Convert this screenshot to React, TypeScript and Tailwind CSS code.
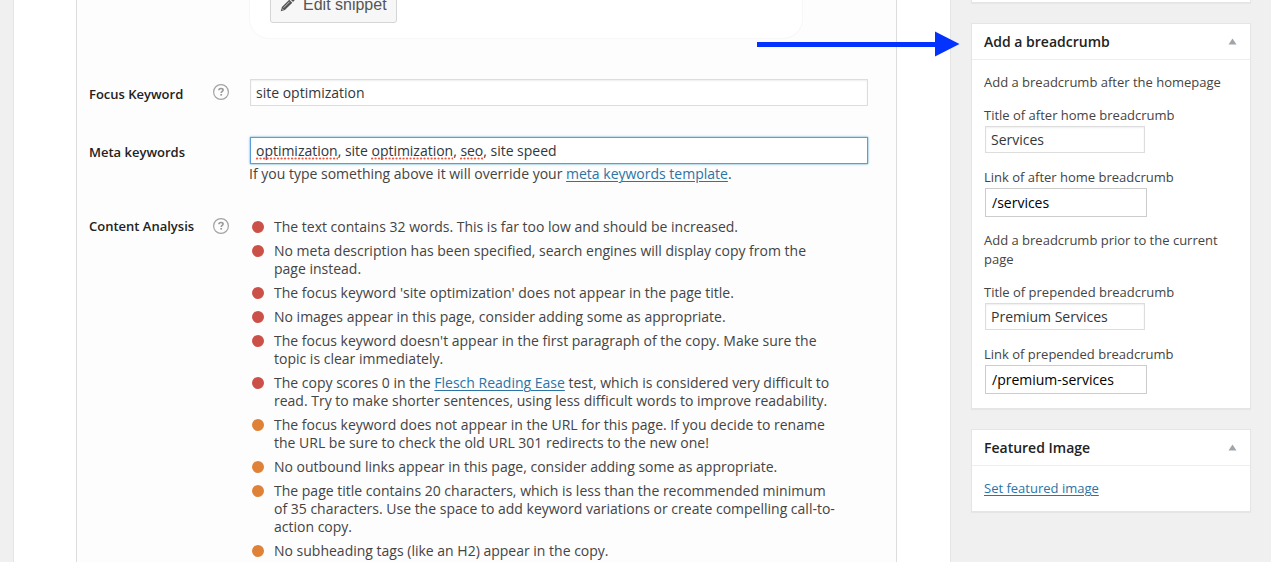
import React from 'react';

type Level = 'bad' | 'ok';
interface Finding {
  level: Level;
  lines: React.ReactNode[];
}

const findings: Finding[] = [
  { level: 'bad', lines: ['The text contains 32 words. This is far too low and should be increased.'] },
  { level: 'bad', lines: ['No meta description has been specified, search engines will display copy from the', 'page instead.'] },
  { level: 'bad', lines: ["The focus keyword 'site optimization' does not appear in the page title."] },
  { level: 'bad', lines: ['No images appear in this page, consider adding some as appropriate.'] },
  { level: 'bad', lines: ["The focus keyword doesn't appear in the first paragraph of the copy. Make sure the", 'topic is clear immediately.'] },
  {
    level: 'bad',
    lines: [
      <>The copy scores 0 in the <Link>Flesch Reading Ease</Link> test, which is considered very difficult to</>,
      'read. Try to make shorter sentences, using less difficult words to improve readability.',
    ],
  },
  { level: 'ok', lines: ['The focus keyword does not appear in the URL for this page. If you decide to rename', 'the URL be sure to check the old URL 301 redirects to the new one!'] },
  { level: 'ok', lines: ['No outbound links appear in this page, consider adding some as appropriate.'] },
  { level: 'ok', lines: ['The page title contains 20 characters, which is less than the recommended minimum', 'of 35 characters. Use the space to add keyword variations or create compelling call-to-', 'action copy.'] },
  { level: 'ok', lines: ['No subheading tags (like an H2) appear in the copy.'] },
];

function Link({ children }: { children: React.ReactNode }) {
  return <a className="text-[#2a74a6] underline decoration-1 underline-offset-2">{children}</a>;
}

function HelpIcon() {
  return (
    <svg width="16" height="16" viewBox="0 0 16 16" fill="none">
      <circle cx="8" cy="8" r="7.4" stroke="#a3a3a3" strokeWidth="1.2" />
      <path d="M5.9 6.2C5.9 4.9 6.8 4.5 8 4.5s2.1.6 2.1 1.6c0 1.3-1.9 1.3-1.9 2.8" stroke="#999" strokeWidth="1.6" />
      <rect x="7.3" y="10" width="1.8" height="1.6" fill="#999" />
    </svg>
  );
}

function RowLabel({ text, help, raised }: { text: string; help?: boolean; raised?: boolean }) {
  return (
    <div className="flex w-[161px] shrink-0 items-start">
      <div className={`w-[124px] text-[13px] font-semibold leading-[18px] text-[#222] ${raised ? 'pt-[4px]' : 'pt-[6px]'}`}>{text}</div>
      {help && <div className="pt-[5px]"><HelpIcon /></div>}
    </div>
  );
}

function Misspelled({ children }: { children: React.ReactNode }) {
  return (
    <span className="relative">
      {children}
      <svg className="absolute left-0 top-[16px] h-[3px] w-full">
        <line x1="1" y1="1.5" x2="100%" y2="1.5" stroke="#ee5a43" strokeWidth="2.2" strokeLinecap="round" strokeDasharray="0.1 3.4" />
      </svg>
    </span>
  );
}

function Card({ title, className, children }: { title: string; className: string; children: React.ReactNode }) {
  return (
    <section className={`border border-[#e5e5e5] bg-white shadow-[0_1px_1px_rgba(0,0,0,0.04)] ${className}`}>
      <header className="flex h-[36px] items-center justify-between border-b border-[#eee] pl-3 pr-[13px]">
        <h2 className="text-[14px] font-semibold leading-5 text-[#222]">{title}</h2>
        <svg width="9" height="7" viewBox="0 0 9 7"><path d="M4.5 .5 8.5 6.5H.5Z" fill="#a0a5aa" /></svg>
      </header>
      {children}
    </section>
  );
}

function TitleField({ label, value }: { label: string; value: string }) {
  return (
    <div>
      <div className="h-[20px] leading-[19px]">{label}</div>
      <div className="ml-px h-[27px] w-[160px] border border-[#ddd] bg-white pl-[5px] text-[14px] leading-[25px] text-[#32373c] shadow-[inset_0_1px_2px_rgba(0,0,0,0.07)]">{value}</div>
    </div>
  );
}

function LinkField({ label, value }: { label: string; value: string }) {
  return (
    <div>
      <div className="h-[20px] leading-[19px]">{label}</div>
      <div className="ml-px h-[29px] w-[162px] border border-[#ccc] bg-white pl-[6px] text-[14px] leading-[27px] text-black">{value}</div>
    </div>
  );
}

export default function App() {
  return (
    <div className="relative flex h-[562px] w-[1271px] overflow-hidden bg-[#f0f0f0] pl-[13px] font-['Open_Sans','Noto_Sans',sans-serif] text-[13px] text-[#444]">
      <main className="h-full w-[938px] shrink-0 border-x border-[#e5e5e5] bg-white pl-[62px]">
        <div className="h-full w-[821px] border-x border-[#ddd] bg-[#fdfdfd] pl-[12px]">
          <div className="ml-[160px] flex h-[39px] w-[554px] items-start rounded-b-[20px] border border-t-0 border-[#f7f7f7] bg-white pl-[20px]">
            <button className="-mt-[14px] flex h-[37px] w-[127px] items-center rounded-[3px] border border-[#d5d5d5] bg-[#f7f7f7] pl-[9px] font-['Liberation_Sans',sans-serif] text-[16px] leading-[18px] text-[#555]">
              <svg width="15" height="15" viewBox="0 0 15 15" className="mr-[8px]">
                <path d="M10 2 11.2.8Q12 0 12.8.8L14.2 2.2Q15 3 14.2 3.8L13 5ZM9.3 2.7 12.3 5.7 4.9 13.1.7 14.3 1.9 10.1Z" fill="#555" />
                <path d="M3.6 10.7 9.6 4.7M2 11.6 3.4 13" stroke="#f7f7f7" strokeWidth=".7" />
              </svg>
              Edit snippet
            </button>
          </div>
          <div className="mt-[40px] flex">
            <RowLabel text="Focus Keyword" help />
            <div className="h-[27px] w-[618px] border border-[#ddd] bg-white pl-[5px] text-[14px] leading-[25px] text-[#32373c] shadow-[inset_0_1px_2px_rgba(0,0,0,0.07)]">site optimization</div>
          </div>
          <div className="mt-[31px] flex">
            <RowLabel text="Meta keywords" />
            <div>
              <div className="h-[27px] w-[618px] whitespace-nowrap border border-[#5b9dd9] bg-white pl-[5px] text-[14px] leading-[25px] tracking-[-0.02px] text-[#32373c] shadow-[0_0_2px_rgba(30,140,190,0.8)]">
                <Misspelled>optimization</Misspelled>, site <Misspelled>optimization</Misspelled>, <Misspelled>seo</Misspelled>, site speed
              </div>
              <p className="-ml-px text-[14px] leading-[20px]">
                If you type something above it will override your <Link>meta keywords template</Link>.
              </p>
            </div>
          </div>
          <div className="mt-[29px] flex">
            <RowLabel text="Content Analysis" help raised />
            <ul className="flex flex-col gap-[6px] pl-[2px] pt-[5px] text-[14px] leading-[18px]">
              {findings.map((f, i) => (
                <li key={i} className="flex gap-[10px]">
                  <span className={`mt-[3px] size-3 shrink-0 rounded-full ${f.level === 'bad' ? 'bg-[#cb5047]' : 'bg-[#df8238]'}`} />
                  <div>
                    {f.lines.map((line, j) => (
                      <div key={j} className="whitespace-nowrap">{line}</div>
                    ))}
                  </div>
                </li>
              ))}
            </ul>
          </div>
        </div>
      </main>

      <aside className="ml-[20px] w-[280px] shrink-0">
        <div className="h-[3px] border border-t-0 border-[#e5e5e5] bg-white shadow-[0_1px_1px_rgba(0,0,0,0.04)]" />
        <Card title="Add a breadcrumb" className="mt-[20px] h-[386px]">
          <div className="px-3 pt-[13px]">
            <p className="leading-[19px]">Add a breadcrumb after the homepage</p>
            <div className="mt-[14px] flex flex-col gap-[15px]">
              <TitleField label="Title of after home breadcrumb" value="Services" />
              <LinkField label="Link of after home breadcrumb" value="/services" />
            </div>
            <p className="mt-[14px] leading-[19px]">Add a breadcrumb prior to the current<br />page</p>
            <div className="mt-[14px] flex flex-col gap-[15px]">
              <TitleField label="Title of prepended breadcrumb" value="Premium Services" />
              <LinkField label="Link of prepended breadcrumb" value="/premium-services" />
            </div>
          </div>
        </Card>
        <Card title="Featured Image" className="mt-[20px] h-[83px]">
          <div className="px-3 pt-[13px] leading-[19px]"><Link>Set featured image</Link></div>
        </Card>
      </aside>

      <svg className="absolute left-[757px] top-[31px]" width="203" height="26" viewBox="0 0 203 26">
        <path d="M0 11H178V.5L202.5 13 178 25.5V16H0Z" fill="#0433ff" />
      </svg>
    </div>
  );
}
